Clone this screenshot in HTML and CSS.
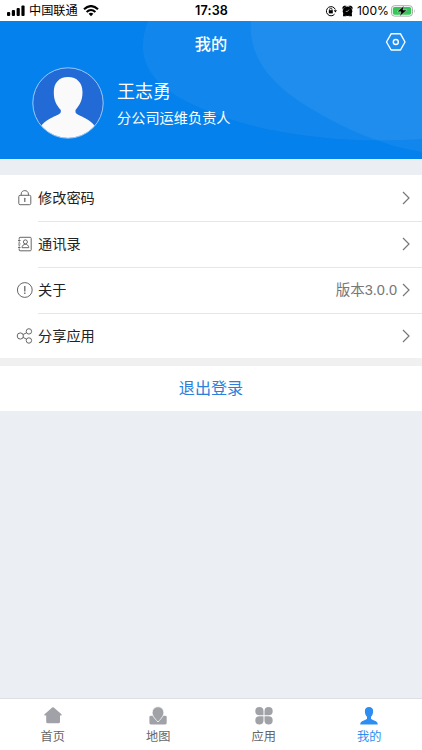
FILE: index.html
```html
<!DOCTYPE html>
<html lang="zh-CN">
<head>
    <meta charset="UTF-8">
    <meta name="viewport" content="width=device-width, initial-scale=1.0">
    <title>我的</title>
    <link rel="stylesheet" href="styles.css">
</head>
<body>

    <div class="statusbar">
        <div class="status-left">
            <svg class="signal" width="18" height="12" viewBox="0 0 18 12">
                <rect x="0" y="7" width="3.2" height="4" rx="1"/>
                <rect x="4.8" y="5" width="3.2" height="6" rx="1"/>
                <rect x="9.6" y="3" width="3.2" height="8" rx="1"/>
                <rect x="14.4" y="0.5" width="3.2" height="10.5" rx="1"/>
            </svg>
            <span class="carrier">中国联通</span>
            <svg class="wifi" width="16" height="12" viewBox="0 0 16 12" fill="none" stroke="#000" stroke-width="2.1">
                <path d="M1 4.3 Q8 -2.2 15 4.3"/>
                <path d="M3.6 7 Q8 3 12.4 7"/>
                <path d="M5.6 8.7 Q8 6.7 10.4 8.7 L8 11.2 Z" fill="#000" stroke="none"/>
            </svg>
        </div>
        <div class="status-time">17:38</div>
        <div class="status-right">
            <svg width="12" height="12" viewBox="0 0 12 12" fill="none" stroke="#000" stroke-width="1">
                <path d="M9.6 9.1 A4.6 4.6 0 1 1 10.3 4.5"/>
                <path d="M8.7 5.2 H12 L10.4 7.6 Z" fill="#000" stroke="none"/>
                <rect x="3.8" y="5.2" width="4" height="3.2" fill="#000" stroke="none"/>
                <path d="M4.6 5.5 V4.4 a1.2 1.2 0 0 1 2.4 0 V5.5" stroke-width=".8"/>
            </svg>
            <svg class="alarm" width="11" height="12" viewBox="0 0 11 12">
                <circle cx="5.5" cy="6.3" r="4.8"/>
                <path d="M.5 4.6 V2 L2 .8 H4.6 Z M10.5 4.6 V2 L9 .8 H6.4 Z M1.2 8 L1 11.2 H4.4 Z M9.8 8 L10 11.2 H6.6 Z"/>
                <path d="M7 4.6 L5.5 6.4 H3.8" fill="none" stroke="#fff" stroke-width=".6"/>
            </svg>
            <span class="percent">100%</span>
            <svg class="battery" width="25" height="12" viewBox="0 0 25 12">
                <rect x=".5" y=".7" width="21" height="10.4" rx="3" fill="#fff" stroke="#aaa"/>
                <rect x="1.8" y="2" width="18.4" height="7.8" rx="1.8" fill="#35c759"/>
                <path d="M23 4 Q24.5 6 23 8 Z" fill="#aaa"/>
                <path d="M13 .8 L6 6.8 H10 L8.8 11.2 L16 5 H12 Z" fill="#000" stroke="#fff" stroke-width=".4"/>
            </svg>
        </div>
    </div>

    <div class="header">
        <svg class="header-bg" width="422" height="138" viewBox="0 0 422 138">
            <path d="M148 0 C132 43 155 68 205 89 C265 114 345 123 422 118 V0 Z"/>
            <path d="M251 0 C248 38 273 65 310 87 C345 108 380 124 422 131 V0 Z"/>
        </svg>
        <h1>我的</h1>
        <svg class="setting" width="22" height="20" viewBox="0 0 22 20" fill="none" stroke="#fff" stroke-width="1.4">
            <path d="M6.1 1.8 H15.5 L20 10 L15.5 18 H6.1 L1.5 10 Z" stroke-linejoin="round"/>
            <circle cx="10.8" cy="10" r="2.5"/>
        </svg>
        <div class="user">
            <svg class="avatar" width="72" height="72" viewBox="0 0 72 72">
                <defs>
                    <clipPath id="round"><circle cx="36" cy="36" r="35"/></clipPath>
                </defs>
                <circle cx="36" cy="36" r="35" fill="#226bd6"/>
                <path clip-path="url(#round)" fill="#fafafa" d="M36 10 C45 10 50.5 16 50.5 25 C50.5 34 47.5 38 43.5 43 V45 C44 49 58 50 64 61 V72 H8 V61 C14 50 28 49 28.8 45 V43 C24.5 38 21.8 34 21.8 25 C21.8 16 27 10 36 10 Z"/>
                <circle cx="36" cy="36" r="35.2" fill="none" stroke="#a9cff8" stroke-width=".9"/>
            </svg>
            <div class="user-info">
                <div class="name">王志勇</div>
                <div class="role">分公司运维负责人</div>
            </div>
        </div>
    </div>

    <ul class="menu">
        <li>
            <svg class="icon" width="18" height="18" viewBox="0 0 18 18">
                <rect x="2.8" y="6.3" width="12" height="9.4" rx="1.3"/>
                <path d="M5.2 6.3 V5 C5.2 .5 12.4 .5 12.4 5 V6.3"/>
                <path d="M8.8 9.8 V13" stroke-width="1.2"/>
                <circle cx="8.8" cy="9.7" r=".4"/>
            </svg>
            <div class="item"><span>修改密码</span><svg class="arrow" width="8" height="14" viewBox="0 0 8 14"><path d="M1 1 L7 7 L1 13"/></svg></div>
        </li>
        <li>
            <svg class="icon" width="18" height="18" viewBox="0 0 18 18">
                <path d="M3.2 4.7 V3.1 Q3.2 2.3 4 2.3 H14.2 Q15.2 2.3 15.2 3.3 V14.8 Q15.2 15.8 14.2 15.8 H4 Q3.2 15.8 3.2 15 V13.4 M3.2 6.4 V8 M3.2 9.9 V11.5"/>
                <path d="M2.1 5.5 H4.5 M2.1 9 H4.5 M2.1 12.5 H4.5"/>
                <circle cx="9.4" cy="6.9" r="2"/>
                <path d="M6 12.7 C6 8.2 12.8 8.2 12.8 12.7 Z"/>
            </svg>
            <div class="item"><span>通讯录</span><svg class="arrow" width="8" height="14" viewBox="0 0 8 14"><path d="M1 1 L7 7 L1 13"/></svg></div>
        </li>
        <li>
            <svg class="icon" width="18" height="18" viewBox="0 0 18 18">
                <circle cx="8.8" cy="9" r="7.4"/>
                <path d="M8.8 5 V10.4 M8.8 11.6 V13" stroke-width="1.3"/>
            </svg>
            <div class="item"><span>关于</span><span class="version">版本3.0.0</span><svg class="arrow" width="8" height="14" viewBox="0 0 8 14"><path d="M1 1 L7 7 L1 13"/></svg></div>
        </li>
        <li>
            <svg class="icon" width="18" height="18" viewBox="0 0 18 18">
                <circle cx="4.3" cy="9" r="3.1"/>
                <circle cx="12.9" cy="4.4" r="2.7"/>
                <circle cx="12.9" cy="13.5" r="2.7"/>
                <path d="M7.1 7.5 L10.5 5.8 M7.1 10.4 L10.5 12.2"/>
            </svg>
            <div class="item"><span>分享应用</span><svg class="arrow" width="8" height="14" viewBox="0 0 8 14"><path d="M1 1 L7 7 L1 13"/></svg></div>
        </li>
    </ul>

    <button type="button" class="logout">退出登录</button>

    <nav class="tabbar">
        <a class="tab">
            <svg width="20" height="20" viewBox="0 0 20 20">
                <path d="M9.2 1.5 Q10 .9 10.8 1.5 L18.5 8.3 Q19.2 9.3 18.2 9.6 H17 V15.8 Q17 17.3 15.5 17.3 H4.7 Q3.2 17.3 3.2 15.8 V9.6 H1.8 Q.8 9.3 1.5 8.3 Z"/>
            </svg>
            <span>首页</span>
        </a>
        <a class="tab">
            <svg width="20" height="20" viewBox="0 0 20 20">
                <path d="M2.8 9.8 H17.3 Q18.7 9.8 18.7 11.2 V17.1 Q18.7 18.5 17.3 18.5 H2.8 Q1.4 18.5 1.4 17.1 V11.2 Q1.4 9.8 2.8 9.8 Z"/>
                <path d="M10 .7 C13.6 .7 15.8 3.3 15.8 6.5 C15.8 9.5 14 11.8 10 16 C6 11.8 4.2 9.5 4.2 6.5 C4.2 3.3 6.4 .7 10 .7 Z" stroke="#fff" stroke-width=".8"/>
            </svg>
            <span>地图</span>
        </a>
        <a class="tab">
            <svg width="20" height="20" viewBox="0 0 20 20">
                <path d="M9.5 9.3 V5.2 A4.1 4.1 0 1 0 5.4 9.3 Z"/>
                <path d="M10.5 9.3 V5.2 A4.1 4.1 0 1 1 14.6 9.3 Z"/>
                <path d="M9.5 10.3 V14.4 A4.1 4.1 0 1 1 5.4 10.3 Z"/>
                <path d="M10.5 10.3 V14.4 A4.1 4.1 0 1 0 14.6 10.3 Z"/>
            </svg>
            <span>应用</span>
        </a>
        <a class="tab active">
            <svg width="20" height="20" viewBox="0 0 20 20">
                <path d="M10 1 C12.7 1 14.3 2.7 14.1 5.2 C14.1 8 13.3 9.3 12 10.8 V12.7 C13 14.3 18.8 14.3 18.8 18.4 H1.2 C1.2 14.3 7 14.3 8 12.7 V10.8 C6.7 9.3 5.9 8 5.9 5.2 C5.7 2.7 7.3 1 10 1 Z"/>
            </svg>
            <span>我的</span>
        </a>
    </nav>

</body>
</html>
```

FILE: styles.css
```css
* {
    box-sizing: border-box;
}

body {
    margin: 0;
    height: 750px;
    display: flex;
    flex-direction: column;
    background-color: #ebeff4;
    font-family: "Liberation Sans", "Noto Sans CJK SC", sans-serif;
    color: #222;
    overflow: hidden;
}

svg {
    display: block;
    flex-shrink: 0;
}

/* status bar */
.statusbar {
    height: 21px;
    flex-shrink: 0;
    display: grid;
    grid-template-columns: 1fr auto 1fr;
    align-items: center;
    padding: 0 6px 0 7px;
    background-color: #fff;
    color: #000;
    font-size: 12.2px;
    line-height: 20px;
}

.status-left, .status-right {
    display: flex;
    align-items: center;
}

.status-right {
    justify-content: flex-end;
}

.carrier {
    margin: 1px 5px 0 4px;
}

.status-time {
    font-family: Inter, sans-serif;
    font-size: 12.6px;
    font-weight: 600;
    letter-spacing: 0.2px;
    padding-top: 1px;
}

.alarm {
    margin: 0 4px 0 5px;
}

.percent {
    font-family: Inter, sans-serif;
    font-size: 12.1px;
    margin: 1px 2px 0 0;
}

/* header */
.header {
    position: relative;
    height: 138px;
    flex-shrink: 0;
    background-color: #0481ed;
    color: #fff;
}

.header-bg {
    position: absolute;
    top: 0;
    left: 0;
    fill: #fff;
    fill-opacity: 0.055;
}

.header h1 {
    position: relative;
    margin: 0;
    height: 46px;
    line-height: 46px;
    font-size: 16.2px;
    font-weight: 500;
    text-align: center;
}

.setting {
    position: absolute;
    top: 11px;
    right: 15px;
}

.user {
    position: relative;
    display: flex;
    padding-left: 32px;
}

.user-info {
    padding: 12px 0 0 13px;
}

.name {
    font-size: 18px;
    line-height: 26px;
}

.role {
    font-size: 14.2px;
    line-height: 26px;
}

/* menu */
.menu {
    list-style: none;
    margin: 16px 0 0;
    padding: 0;
    background-color: #fff;
    border-bottom: 8px solid #f0f0f0;
}

.menu li {
    display: flex;
    height: 46px;
    padding-left: 16px;
}

.menu li:first-child {
    height: 47px;
}

.menu li:last-child {
    height: 44px;
}

.icon {
    margin-top: 13px;
    fill: none;
    stroke: #666;
    stroke-width: 1;
}

.menu li:first-child .icon {
    margin-top: 14px;
}

.item {
    flex: 1;
    display: flex;
    align-items: center;
    height: 100%;
    margin-left: 4px;
    padding: 0 12px 2px 0;
    border-bottom: 1px solid #e6e6e6;
    font-size: 14.2px;
}

.item span {
    padding-bottom: 2px;
}

.menu li:first-child .item, .menu li:last-child .item {
    padding-bottom: 0;
}

.menu li:last-child .item {
    border-bottom: none;
}

.item .version {
    margin-left: auto;
    color: #777;
    font-size: 14.5px;
}

.arrow {
    margin-left: auto;
    fill: none;
    stroke: #777;
    stroke-width: 1.2;
}

.version + .arrow {
    margin-left: 5px;
}

.logout {
    height: 45px;
    flex-shrink: 0;
    border: none;
    padding: 0 0 3px;
    background-color: #fff;
    color: #2d7fdc;
    font-family: inherit;
    font-size: 16.1px;
}

/* bottom navigation */
.tabbar {
    display: flex;
    height: 52px;
    margin-top: auto;
    flex-shrink: 0;
    border-top: 1px solid #dcdfe3;
    background-color: #fff;
}

.tab {
    flex: 1;
    display: flex;
    flex-direction: column;
    align-items: center;
    padding-top: 7px;
    font-size: 12.2px;
    line-height: 22px;
    color: #666;
}

.tab svg {
    fill: #a0a2a7;
}

.active {
    color: #2d8df0;
}

.active svg {
    fill: #2d8df0;
}
```
